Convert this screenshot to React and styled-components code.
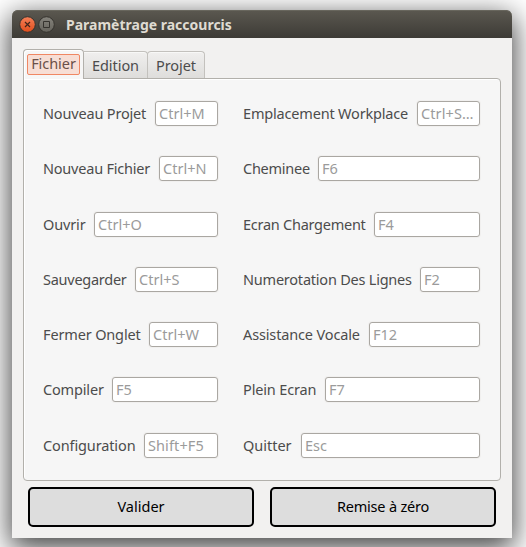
import React from 'react';
import styled, { createGlobalStyle } from 'styled-components';

const GlobalStyle = createGlobalStyle`
  *, *::before, *::after { box-sizing: border-box; }
  body {
    margin: 0;
    background: #fff;
    font: 14.5px/20px "Noto Sans", "Open Sans", sans-serif;
    color: #4c4c4c;
    overflow: hidden;
  }
`;

const Desktop = styled.main`
  height: 547px;
  padding: 10px 14px 9px 12px;
  overflow: hidden;
`;

const Window = styled.section`
  display: flex;
  flex-direction: column;
  height: 528px;
  border-radius: 6px 6px 0 0;
  background: #f2f1f0;
  box-shadow: 0 8px 29px 2px rgba(0, 0, 0, 0.74);
`;

const TitleBar = styled.header`
  display: flex;
  align-items: center;
  height: 28px;
  padding: 1px 7px 0;
  border-radius: 6px 6px 0 0;
  background: linear-gradient(#5b5850, #3d3b36);
  box-shadow: inset 0 1px #68665d;
`;

const TitleIcon = styled.svg`
  width: 17px;
  height: 17px;
  margin-right: 2px;
`;

const Title = styled.h1`
  margin: 0 0 0 9px;
  font-size: 14px;
  line-height: 20px;
  font-weight: 700;
  color: #dfdbd2;
  white-space: nowrap;
`;

const Content = styled.div`
  display: flex;
  flex-direction: column;
  padding: 11px 11px 0;
`;

const TabList = styled.div`
  display: flex;
  align-items: flex-end;
  height: 30px;
  margin-bottom: -1px;
`;

const Tab = styled.div`
  display: flex;
  align-items: center;
  justify-content: center;
  width: ${(p) => p.$width}px;
  height: 27px;
  margin-bottom: 1px;
  padding-bottom: 1px;
  border: 1px solid #c3c1bd;
  border-left-width: ${(p) => (p.$first ? 0 : 1)}px;
  border-bottom: 0;
  border-radius: ${(p) => (p.$first ? '0 4px 0 0' : '4px 4px 0 0')};
  background: linear-gradient(#f0efee, #dedddb);
  box-shadow: inset 0 1px #f8f8f7;
  white-space: nowrap;
  letter-spacing: -0.05px;
  margin-left: ${(p) => (p.$first ? 0 : -1)}px;
`;

const ActiveTab = styled(Tab)`
  z-index: 1;
  height: 30px;
  margin: 0;
  padding: 4px 3px 0;
  align-items: flex-start;
  border: 1px solid #b2b0ab;
  border-bottom: 0;
  border-radius: 4px 4px 0 0;
  background: #f6f6f6;
  box-shadow: inset 1px 1px #fff;
`;

const FocusRing = styled.span`
  display: flex;
  justify-content: center;
  width: 53px;
  height: 21px;
  border: 1px solid #f08763;
  border-radius: 2px;
  background: #f7ded5;
  color: #6a5049;
  line-height: 16px;
`;

const Panel = styled.div`
  display: grid;
  grid-template-columns: 175px 237px;
  grid-template-rows: 55px 56px 55px 55px 55px 56px 25px;
  grid-auto-flow: column;
  column-gap: 25px;
  align-items: start;
  height: 403px;
  padding: 22px 19px;
  border: 1px solid #b2b0ab;
  border-radius: 0 4px 4px 4px;
  background: #f6f6f6;
  box-shadow: inset 1px 1px #fff;
`;

const FieldRow = styled.label`
  display: flex;
  align-items: center;
  justify-content: space-between;
  height: 25px;
`;

const Caption = styled.span`
  width: 0;
  flex: 1;
  padding-bottom: 2px;
  white-space: nowrap;
  letter-spacing: ${(p) => p.$tracking}px;
`;

const Field = styled.span`
  flex: none;
  width: ${(p) => p.$width}px;
  height: 25px;
  padding: 1px 3px 0;
  border: 1px solid #aaa7a2;
  border-radius: 3px;
  background: #fff;
  box-shadow: 0 0 0 1px #f1f0ef;
  color: #9b9b9b;
  line-height: 20px;
  white-space: nowrap;
  letter-spacing: ${(p) => p.$tracking || 0}px;
`;

const Actions = styled.footer`
  display: grid;
  grid-template-columns: 226px 226px;
  gap: 16px;
  padding: 6px 5px 0;
`;

const Button = styled.button`
  height: 40px;
  padding: 0 0 2px;
  border: 2px solid #000;
  border-radius: 5px;
  background: #ddd;
  font: inherit;
  color: #000;
  letter-spacing: ${(p) => p.$tracking || 0}px;
`;

const shortcuts = [
  ['Nouveau Projet', 'Ctrl+M', 63, -0.17],
  ['Nouveau Fichier', 'Ctrl+N', 59, -0.21],
  ['Ouvrir', 'Ctrl+O', 124, -0.15],
  ['Sauvegarder', 'Ctrl+S', 83, -0.26],
  ['Fermer Onglet', 'Ctrl+W', 69, -0.15],
  ['Compiler', 'F5', 106, -0.16],
  ['Configuration', 'Shift+F5', 74, -0.12, 0.1],
  ['Emplacement Workplace', 'Ctrl+S…', 63, -0.18, 0.1],
  ['Cheminee', 'F6', 162, -0.26],
  ['Ecran Chargement', 'F4', 106, -0.26],
  ['Numerotation Des Lignes', 'F2', 60, -0.22],
  ['Assistance Vocale', 'F12', 111, -0.14],
  ['Plein Ecran', 'F7', 155, -0.14],
  ['Quitter', 'Esc', 179, -0.02],
];

export default function App() {
  return (
    <>
      <GlobalStyle />
      <Desktop>
        <Window>
          <TitleBar>
            <TitleIcon viewBox="0 0 17 17">
              <defs>
                <linearGradient id="close" x2="0" y2="1">
                  <stop stopColor="#f58058" />
                  <stop offset="1" stopColor="#e04d1b" />
                </linearGradient>
              </defs>
              <circle cx="8.5" cy="8.5" r="7.8" fill="url(#close)" stroke="#35332e" />
              <path d="M6 6l5 5M11 6l-5 5" stroke="#42251a" strokeWidth="1.2" />
            </TitleIcon>
            <TitleIcon viewBox="0 0 17 17">
              <defs>
                <linearGradient id="maximize" x2="0" y2="1">
                  <stop stopColor="#85837c" />
                  <stop offset="1" stopColor="#65635c" />
                </linearGradient>
              </defs>
              <circle cx="8.5" cy="8.5" r="7.8" fill="url(#maximize)" stroke="#35332e" />
              <path d="M5.5 5.5h6v6h-6z" fill="none" stroke="#35332e" />
            </TitleIcon>
            <Title>Paramètrage raccourcis</Title>
          </TitleBar>
          <Content>
            <TabList>
              <ActiveTab $width={61}>
                <FocusRing>Fichier</FocusRing>
              </ActiveTab>
              <Tab $width={64} $first>Edition</Tab>
              <Tab $width={58}>Projet</Tab>
            </TabList>
            <Panel>
              {shortcuts.map(([name, keys, width, tracking, keyTracking]) => (
                <FieldRow key={name}>
                  <Caption $tracking={tracking}>{name}</Caption>
                  <Field $width={width} $tracking={keyTracking}>{keys}</Field>
                </FieldRow>
              ))}
            </Panel>
            <Actions>
              <Button>Valider</Button>
              <Button $tracking={-0.2}>Remise à zéro</Button>
            </Actions>
          </Content>
        </Window>
      </Desktop>
    </>
  );
}
